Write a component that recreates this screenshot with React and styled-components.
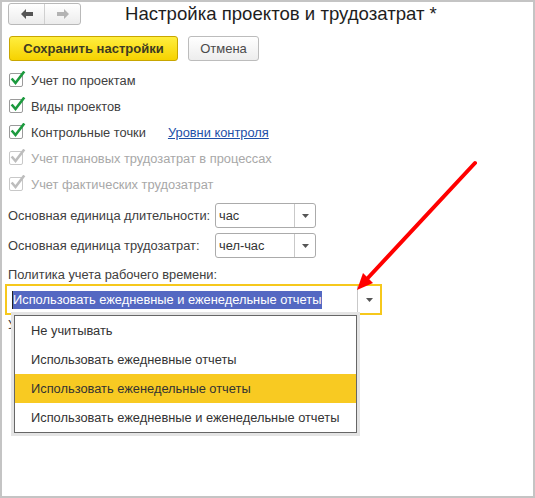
import React from 'react';
import styled, { createGlobalStyle } from 'styled-components';

const GlobalStyle = createGlobalStyle`
  body {
    margin: 0;
    font-family: "Liberation Sans", Arial, sans-serif;
    background: #fff;
  }
`;

const Frame = styled.div`
  position: relative;
  box-sizing: border-box;
  width: 535px;
  height: 498px;
  border: 2px solid #c4c4c4;
  padding: 1px 6px 0 6px;
  background: #fff;
  color: #404040;
  font-size: 12.85px;
`;

const Header = styled.div`
  display: flex;
  align-items: center;
  height: 22px;
`;

const NavGroup = styled.div`
  display: flex;
  box-sizing: border-box;
  width: 73px;
  height: 22px;
  border: 1px solid #b9b9b9;
  border-radius: 3px;
  background: linear-gradient(#ffffff, #ececec);
  overflow: hidden;
`;

const NavButton = styled.div`
  flex: 1;
  display: flex;
  align-items: center;
  justify-content: center;
  & + & {
    border-left: 1px solid #d0d0d0;
  }
`;

const Title = styled.div`
  margin-left: 44px;
  font-size: 18.6px;
  color: #1e1e1e;
  white-space: nowrap;
`;

const Toolbar = styled.div`
  display: flex;
  gap: 10px;
  margin-top: 11px;
  padding-left: 1px;
`;

const Button = styled.div`
  box-sizing: border-box;
  height: 25px;
  display: flex;
  align-items: center;
  justify-content: center;
  width: ${(p) => p.$w}px;
  border-radius: 3px;
  border: 1px solid ${(p) => (p.$primary ? '#c8a600' : '#bcbcbc')};
  background: ${(p) =>
    p.$primary
      ? 'linear-gradient(#ffee3f, #f6d200)'
      : 'linear-gradient(#ffffff, #ededed)'};
  font-weight: ${(p) => (p.$primary ? 700 : 400)};
  color: ${(p) => (p.$primary ? '#3d3a22' : '#4a4a4a')};
  font-size: 13px;
`;

const CheckList = styled.div`
  margin-top: 6px;
  padding-left: 1px;
`;

const CheckRow = styled.div`
  display: flex;
  align-items: center;
  height: 26px;
  color: ${(p) => (p.$disabled ? '#a8a8a8' : '#404040')};
`;

const Box = styled.div`
  position: relative;
  box-sizing: border-box;
  width: 14px;
  height: 14px;
  border: 1px solid ${(p) => (p.$disabled ? '#c8c8c8' : '#9a9a9a')};
  border-radius: 2px;
  background: #fff;
  margin-right: 8px;
  & > svg {
    position: absolute;
    left: 0px;
    top: -3px;
  }
`;

const Link = styled.span`
  margin-left: 22px;
  color: #1d4fa8;
  text-decoration: underline;
`;

const FieldRow = styled.div`
  display: flex;
  align-items: center;
  margin-top: ${(p) => p.$mt}px;
`;

const FieldLabel = styled.div`
  width: 207px;
  white-space: nowrap;
`;

const Select = styled.div`
  box-sizing: border-box;
  display: flex;
  width: 101px;
  height: 25px;
  border: 1px solid #ababab;
  border-radius: 3px;
  background: #fff;
`;

const SelectValue = styled.div`
  flex: 1;
  display: flex;
  align-items: center;
  padding-left: 3px;
  color: #333;
`;

const DropButton = styled.div`
  width: ${(p) => p.$w}px;
  border-left: 1px solid #c9c9c9;
  display: flex;
  align-items: center;
  justify-content: center;
`;

const PolicyLabel = styled.div`
  margin-top: 9px;
  line-height: 16px;
`;

const BigWrap = styled.div`
  position: relative;
  margin-top: 1px;
  margin-left: -3px;
`;

const BigSelect = styled.div`
  box-sizing: border-box;
  display: flex;
  width: 377px;
  height: 31px;
  border: 2px solid #f6c81c;
  background: #fff;
`;

const BigValue = styled.div`
  flex: 1;
  display: flex;
  align-items: center;
  padding-left: 5px;
`;

const Selection = styled.span`
  background: #5468c2;
  color: #fff;
  line-height: 18px;
  padding-right: 1px;
  border-left: 1px solid #222;
`;

const HiddenLabel = styled.div`
  margin-top: 3px;
  margin-left: 3px;
  line-height: 14px;
`;

const Popup = styled.div`
  position: absolute;
  left: 6px;
  top: 28px;
  box-sizing: border-box;
  width: 349px;
  border: 3px solid #e4e4e4;
  background: #fff;
  z-index: 2;
`;

const PopupInner = styled.div`
  border: 1px solid #666;
`;

const Item = styled.div`
  height: 29px;
  display: flex;
  align-items: center;
  padding-left: 16px;
  color: #333;
  background: ${(p) => (p.$active ? '#f8ca22' : 'transparent')};
`;

const Overlay = styled.svg`
  position: absolute;
  left: -2px;
  top: -2px;
  pointer-events: none;
  z-index: 3;
`;

const Check = ({ disabled }) => (
  <svg width="16" height="16" viewBox="0 0 16 16">
    <path
      d="M2.5 8.5 L5.5 12 L13.5 1.5"
      fill="none"
      stroke={disabled ? '#bdbdbd' : '#1c9a3e'}
      strokeWidth="2.6"
      strokeLinecap="square"
    />
  </svg>
);

const Arrow = ({ dir, color }) => (
  <svg width="12" height="10" viewBox="0 0 12 10">
    <path
      d={dir === 'left' ? 'M0 5 L5 0 L5 3 L12 3 L12 7 L5 7 L5 10 Z' : 'M12 5 L7 0 L7 3 L0 3 L0 7 L7 7 L7 10 Z'}
      fill={color}
    />
  </svg>
);

const Caret = () => (
  <svg width="7" height="4" viewBox="0 0 7 4">
    <path d="M0 0 L7 0 L3.5 4 Z" fill="#555" />
  </svg>
);

const checks = [
  { label: 'Учет по проектам' },
  { label: 'Виды проектов' },
  { label: 'Контрольные точки', link: 'Уровни контроля' },
  { label: 'Учет плановых трудозатрат в процессах', disabled: true },
  { label: 'Учет фактических трудозатрат', disabled: true },
];

const items = [
  'Не учитывать',
  'Использовать ежедневные отчеты',
  'Использовать еженедельные отчеты',
  'Использовать ежедневные и еженедельные отчеты',
];

export default function App() {
  return (
    <>
      <GlobalStyle />
      <Frame>
        <Header>
          <NavGroup>
            <NavButton>
              <Arrow dir="left" color="#555" />
            </NavButton>
            <NavButton>
              <Arrow dir="right" color="#b3b3b3" />
            </NavButton>
          </NavGroup>
          <Title>Настройка проектов и трудозатрат *</Title>
        </Header>

        <Toolbar>
          <Button $primary $w={169}>Сохранить настройки</Button>
          <Button $w={71}>Отмена</Button>
        </Toolbar>

        <CheckList>
          {checks.map((c) => (
            <CheckRow key={c.label} $disabled={c.disabled}>
              <Box $disabled={c.disabled}>
                <Check disabled={c.disabled} />
              </Box>
              {c.label}
              {c.link && <Link>{c.link}</Link>}
            </CheckRow>
          ))}
        </CheckList>

        <FieldRow $mt={6}>
          <FieldLabel>Основная единица длительности:</FieldLabel>
          <Select>
            <SelectValue>час</SelectValue>
            <DropButton $w={20}>
              <Caret />
            </DropButton>
          </Select>
        </FieldRow>
        <FieldRow $mt={5}>
          <FieldLabel>Основная единица трудозатрат:</FieldLabel>
          <Select>
            <SelectValue>чел-час</SelectValue>
            <DropButton $w={20}>
              <Caret />
            </DropButton>
          </Select>
        </FieldRow>

        <PolicyLabel>Политика учета рабочего времени:</PolicyLabel>
        <BigWrap>
          <BigSelect>
            <BigValue>
              <Selection>Использовать ежедневные и еженедельные отчеты</Selection>
            </BigValue>
            <DropButton $w={22}>
              <Caret />
            </DropButton>
          </BigSelect>
          <HiddenLabel>Учитывать</HiddenLabel>
          <Popup>
            <PopupInner>
              {items.map((t, i) => (
                <Item key={t} $active={i === 2}>
                  {t}
                </Item>
              ))}
            </PopupInner>
          </Popup>
        </BigWrap>

        <Overlay width="535" height="498" viewBox="0 0 535 498">
          <line x1="475" y1="163" x2="366" y2="280" stroke="#ff0000" strokeWidth="4" strokeLinecap="round" />
          <polygon points="357,290 373,283 363,273" fill="#ff0000" />
        </Overlay>
      </Frame>
    </>
  );
}
